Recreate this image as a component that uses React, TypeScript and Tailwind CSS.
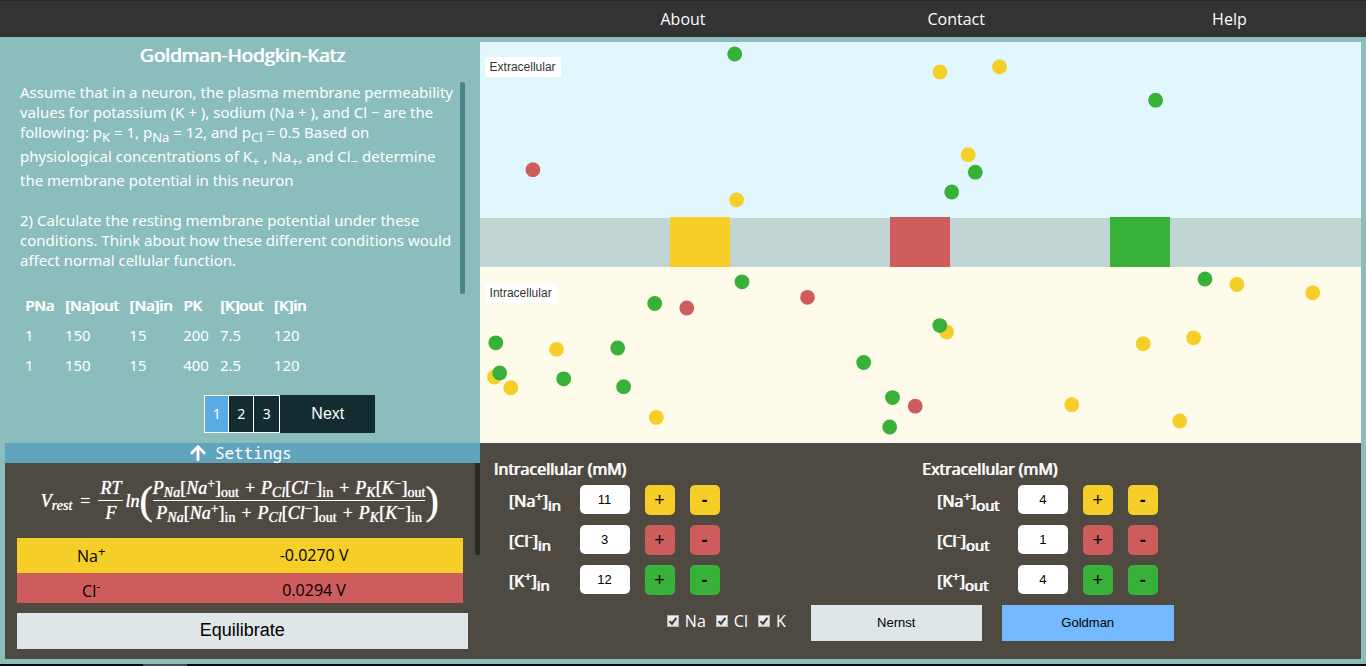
import React, { useState } from "react";
import { FaArrowUp } from "react-icons/fa";

type Ion = "na" | "cl" | "k";

const fillClass: Record<Ion, string> = {
  na: "fill-[#f5ce28]",
  cl: "fill-[#cd5c5c]",
  k: "fill-[#37b137]",
};

const bgClass: Record<Ion, string> = {
  na: "bg-[#f5ce28]",
  cl: "bg-[#cd5c5c]",
  k: "bg-[#37b137]",
};

const STRONG = "font-normal [text-shadow:1px_0_0_white]";

const particles: [Ion, number, number][] = [
  ["k", 254.7, 12],
  ["cl", 52.9, 127.7],
  ["na", 256.5, 157.8],
  ["na", 460, 30],
  ["na", 519.5, 24.8],
  ["k", 675.6, 58.2],
  ["na", 488.2, 112.7],
  ["k", 495.3, 130.2],
  ["k", 471.7, 150],
  ["k", 262, 239.8],
  ["k", 174.7, 261.5],
  ["cl", 206.8, 266],
  ["cl", 327.5, 255.3],
  ["k", 15.8, 300.8],
  ["na", 76.5, 307.3],
  ["k", 137.7, 306],
  ["na", 14.5, 335],
  ["k", 19.7, 330.9],
  ["na", 30.8, 345.7],
  ["k", 83.7, 336.8],
  ["k", 143.6, 344.7],
  ["na", 176.3, 375.4],
  ["k", 383.7, 320.5],
  ["k", 412.5, 355.6],
  ["cl", 435.2, 364.2],
  ["k", 409.7, 385],
  ["na", 466.7, 290],
  ["k", 459.8, 283.6],
  ["k", 725, 237],
  ["na", 756.8, 242.5],
  ["na", 832.7, 250.8],
  ["na", 663.2, 301.7],
  ["na", 713.6, 295.8],
  ["na", 591.8, 362.7],
  ["na", 699.7, 379],
];

function Header() {
  return (
    <header className="grid h-[37px] grid-cols-5 items-center border-t border-[#282828] bg-[#333333] text-center text-base text-white">
      <a href="#about" className="col-start-3">About</a>
      <a href="#contact">Contact</a>
      <a href="#help">Help</a>
    </header>
  );
}

function Sub({ children }: { children: React.ReactNode }) {
  return <sub className="static align-sub text-[13px] leading-[18px]">{children}</sub>;
}

const tableHead = ["PNa", "[Na]out", "[Na]in", "PK", "[K]out", "[K]in"];
const tableRows = [
  ["1", "150", "15", "200", "7.5", "120"],
  ["1", "150", "15", "400", "2.5", "120"],
];

function Question() {
  const [page, setPage] = useState(1);
  return (
    <section className="flex flex-col text-white">
      <h1 className={"text-center text-[19px] leading-[26px] " + STRONG}>Goldman-Hodgkin-Katz</h1>
      <div className="mt-3.5 flex flex-1 items-start px-[15px]">
        <div className="flex-1 font-['Noto_Sans',sans-serif] text-[15px] leading-5">
          <p>
            Assume that in a neuron, the plasma membrane permeability values for potassium (K + ), sodium (Na + ), and
            Cl − are the following: p<Sub>K</Sub> = 1, p<Sub>Na</Sub> = 12, and p<Sub>Cl</Sub> = 0.5 Based on
            physiological concentrations of K<Sub>+</Sub> , Na<Sub>+</Sub>, and Cl<Sub>−</Sub> determine the membrane
            potential in this neuron
          </p>
          <p className="mt-5">
            2) Calculate the resting membrane potential under these conditions. Think about how these different
            conditions would affect normal cellular function.
          </p>
          <table className="mt-5 text-left">
            <thead>
              <tr>
                {tableHead.map((h) => (
                  <th key={h} className={"py-[5px] pr-1.5 pl-[5px] " + STRONG}>{h}</th>
                ))}
              </tr>
            </thead>
            <tbody>
              {tableRows.map((r, i) => (
                <tr key={i}>
                  {r.map((c, j) => (
                    <td key={j} className="py-[5px] pr-1.5 pl-[5px]">{c}</td>
                  ))}
                </tr>
              ))}
            </tbody>
          </table>
        </div>
        <div className="h-[212px] w-[5px] rounded-sm bg-[#498584]" />
      </div>
      <nav aria-label="Pages" className="mb-2.5 flex h-[38px] justify-center pl-[95px]">
        <div className="flex divide-x divide-white border border-white font-['Noto_Sans',sans-serif] text-sm">
          {[1, 2, 3].map((n) => (
            <button
              key={n}
              onClick={() => setPage(n)}
              className={n === page ? "w-6 bg-[#59abe3]" : "w-[25px] bg-[#132c30]"}
            >
              {n}
            </button>
          ))}
        </div>
        <button
          onClick={() => setPage(Math.min(3, page + 1))}
          className="w-[95px] bg-[#132c30] font-['Liberation_Sans',sans-serif] text-base"
        >
          Next
        </button>
      </nav>
    </section>
  );
}

function ZoneLabel({ children }: { children: React.ReactNode }) {
  return (
    <span className="bg-white px-[5px] font-['Liberation_Sans',sans-serif] text-xs leading-5 text-[#333333]">
      {children}
    </span>
  );
}

function Membrane() {
  return (
    <section className="relative flex flex-col">
      <div className="flex h-44 items-start bg-[#e1f7fd] pt-[15px] pl-[5px]">
        <ZoneLabel>Extracellular</ZoneLabel>
      </div>
      <div className="flex h-[49px] justify-between bg-[#c1d5d4] pr-[calc(25%-29px)] pl-[calc(25%-30px)]">
        {(["na", "cl", "k"] as Ion[]).map((ion) => (
          <div key={ion} className={"-mt-px h-[50px] w-[60px] " + bgClass[ion]} />
        ))}
      </div>
      <div className="flex min-h-44 flex-1 items-start bg-[#fefbea] pt-4 pl-[5px]">
        <ZoneLabel>Intracellular</ZoneLabel>
      </div>
      <svg className="pointer-events-none absolute inset-0 h-full w-full" aria-hidden="true">
        {particles.map(([ion, x, y], i) => (
          <circle key={i} cx={x} cy={y} r="7.4" className={fillClass[ion]} />
        ))}
      </svg>
    </section>
  );
}

function Sm({ children, roman }: { children: React.ReactNode; roman?: boolean }) {
  return (
    <sub className={"top-[3px] bottom-0 text-sm leading-none " + (roman ? "not-italic" : "")}>{children}</sub>
  );
}

function Term({ sym, charge, side }: { sym: string; charge: string; side: string }) {
  return (
    <span>
      P<Sm>{sym}</Sm>
      <span className="not-italic">[</span>
      {sym}
      <sup className="top-[-6px] text-sm leading-none not-italic">{charge}</sup>
      <span className="not-italic">]</span>
      <Sm roman>{side}</Sm>
    </span>
  );
}

function Sum({ sides }: { sides: [string, string, string] }) {
  return (
    <span className="flex items-center gap-1.5">
      <Term sym="Na" charge="+" side={sides[0]} />
      <span className="not-italic">+</span>
      <Term sym="Cl" charge="−" side={sides[1]} />
      <span className="not-italic">+</span>
      <Term sym="K" charge="−" side={sides[2]} />
    </span>
  );
}

function Equation() {
  return (
    <div className="flex h-[75px] items-center justify-center font-['Liberation_Serif',serif] text-lg leading-6 whitespace-nowrap text-white italic [text-shadow:0_0_1px_white]">
      <span>
        V<Sm>rest</Sm>
      </span>
      <span className="mx-2 not-italic">=</span>
      <span className="flex flex-col text-center">
        <span className="border-b border-white px-0.5">RT</span>
        <span>F</span>
      </span>
      <span className="ml-0.5">ln</span>
      <span className="text-[40px] leading-none not-italic">(</span>
      <span className="flex flex-col items-center">
        <span className="border-b border-white">
          <Sum sides={["out", "in", "out"]} />
        </span>
        <Sum sides={["in", "out", "in"]} />
      </span>
      <span className="text-[40px] leading-none not-italic">)</span>
    </div>
  );
}

function Results() {
  return (
    <section className="flex flex-col bg-[#4e4a42]">
      <button className="flex h-5 items-center justify-center gap-2 bg-[#60a3bc] pr-1 font-['Noto_Sans_Mono','DejaVu_Sans_Mono',monospace] text-base leading-5 text-white">
        <FaArrowUp className="size-[18px]" />
        Settings
      </button>
      <div className="flex flex-1 items-start">
        <div className="flex-1 px-3">
          <Equation />
          <div className="h-[65px] overflow-hidden">
            <table className="w-full table-fixed text-center text-base text-black">
              <tbody>
                <tr className="h-[35px] bg-[#f5ce28]">
                  <td className="w-1/3">
                    Na<sup className="top-[-6px] text-[13px]">+</sup>
                  </td>
                  <td className="pb-0.5">-0.0270 V</td>
                </tr>
                <tr className="h-[35px] bg-[#cd5c5c]">
                  <td>
                    Cl<sup className="top-[-6px] text-[13px]">-</sup>
                  </td>
                  <td className="pb-0.5">0.0294 V</td>
                </tr>
              </tbody>
            </table>
          </div>
        </div>
        <div className="h-[92px] w-[5px] rounded-b-sm bg-[#2b2825]" />
      </div>
      <button className="mx-3 mb-2.5 h-9 bg-[#dfe6e9] pb-0.5 font-['Liberation_Sans',sans-serif] text-lg leading-6 text-black">
        Equilibrate
      </button>
    </section>
  );
}

const ions: { ion: Ion; name: string; charge: string }[] = [
  { ion: "na", name: "Na", charge: "+" },
  { ion: "cl", name: "Cl", charge: "-" },
  { ion: "k", name: "K", charge: "+" },
];

function Concentrations({ title, side, start }: { title: string; side: string; start: number[] }) {
  const [values, setValues] = useState(start);
  const change = (i: number, v: number) => setValues(values.map((old, j) => (j === i ? Math.max(0, v) : old)));
  return (
    <div>
      <h2 className={"text-base leading-6 " + STRONG}>{title}</h2>
      <div className="mt-1 flex flex-col gap-2.5 pl-[15px]">
        {ions.map(({ ion, name, charge }, i) => {
          const id = side + "-" + ion;
          return (
            <div key={id} className="flex h-[30px] items-start gap-[15px] text-black">
              <label
                htmlFor={id}
                className={"w-14 pt-1 text-base leading-6 text-white " + (side === "out" ? "mr-2.5 " : "") + STRONG}
              >
                [{name}
                <sup className="top-[-6px] text-[13px]">{charge}</sup>]
                <sub className="top-1 bottom-0 text-[15px]">{side}</sub>
              </label>
              <input
                id={id}
                type="text"
                value={values[i]}
                onChange={(e) => change(i, Number(e.target.value) || 0)}
                className="h-[29px] w-[50px] rounded-[5px] bg-white text-center font-['Liberation_Sans',sans-serif] text-[13px]"
              />
              <button
                aria-label={"Increase " + name + " " + side}
                onClick={() => change(i, values[i] + 1)}
                className={"size-[30px] rounded-[5px] font-['Liberation_Sans',sans-serif] text-lg " + bgClass[ion]}
              >
                +
              </button>
              <button
                aria-label={"Decrease " + name + " " + side}
                onClick={() => change(i, values[i] - 1)}
                className={"size-[30px] rounded-[5px] font-['Liberation_Sans',sans-serif] text-lg font-bold " + bgClass[ion]}
              >
                -
              </button>
            </div>
          );
        })}
      </div>
    </div>
  );
}

function Check({ label }: { label: string }) {
  return (
    <label className="flex items-center gap-1.5 text-base leading-6">
      <span className="relative size-3">
        <input
          type="checkbox"
          defaultChecked
          className="peer block size-3 appearance-none border border-[#b4b4b4] bg-linear-to-b from-[#f2f2f2] to-[#dddddd]"
        />
        <svg
          viewBox="0 0 12 12"
          className="pointer-events-none absolute inset-0 hidden size-3 fill-none stroke-[#3c3c3c] stroke-2 peer-checked:block"
        >
          <path d="M2.6 6.2 5 8.7 9.4 2.8" />
        </svg>
      </span>
      {label}
    </label>
  );
}

function Controls() {
  return (
    <section className="flex flex-col bg-[#4e4a42] pt-3.5 text-white">
      <div className="grid grid-cols-2 pr-[11px] pl-3.5">
        <Concentrations title="Intracellular (mM)" side="in" start={[11, 3, 12]} />
        <Concentrations title="Extracellular (mM)" side="out" start={[4, 1, 4]} />
      </div>
      <div className="mt-2.5 flex justify-center">
        <div className="mr-[25px] flex gap-2.5 self-start pt-1">
          <Check label="Na" />
          <Check label="Cl" />
          <Check label="K" />
        </div>
        <div className="flex gap-5 font-['Liberation_Sans',sans-serif] text-[13px] text-black">
          <button className="h-9 w-[171px] bg-[#dfe6e9]">Nernst</button>
          <button className="h-9 w-[172px] bg-[#74b9ff]">Goldman</button>
        </div>
      </div>
    </section>
  );
}

export default function App() {
  return (
    <div className="flex min-h-screen flex-col bg-[#8abdbb] font-['Open_Sans',sans-serif]">
      <Header />
      <main className="grid flex-1 grid-cols-[35fr_65fr] grid-rows-[401fr_216fr] p-[5px]">
        <Question />
        <Membrane />
        <Results />
        <Controls />
      </main>
      <div className="h-0.5 bg-[#08070b] pl-[143px]">
        <div className="h-0.5 w-11 bg-[#48474b]" />
      </div>
    </div>
  );
}
